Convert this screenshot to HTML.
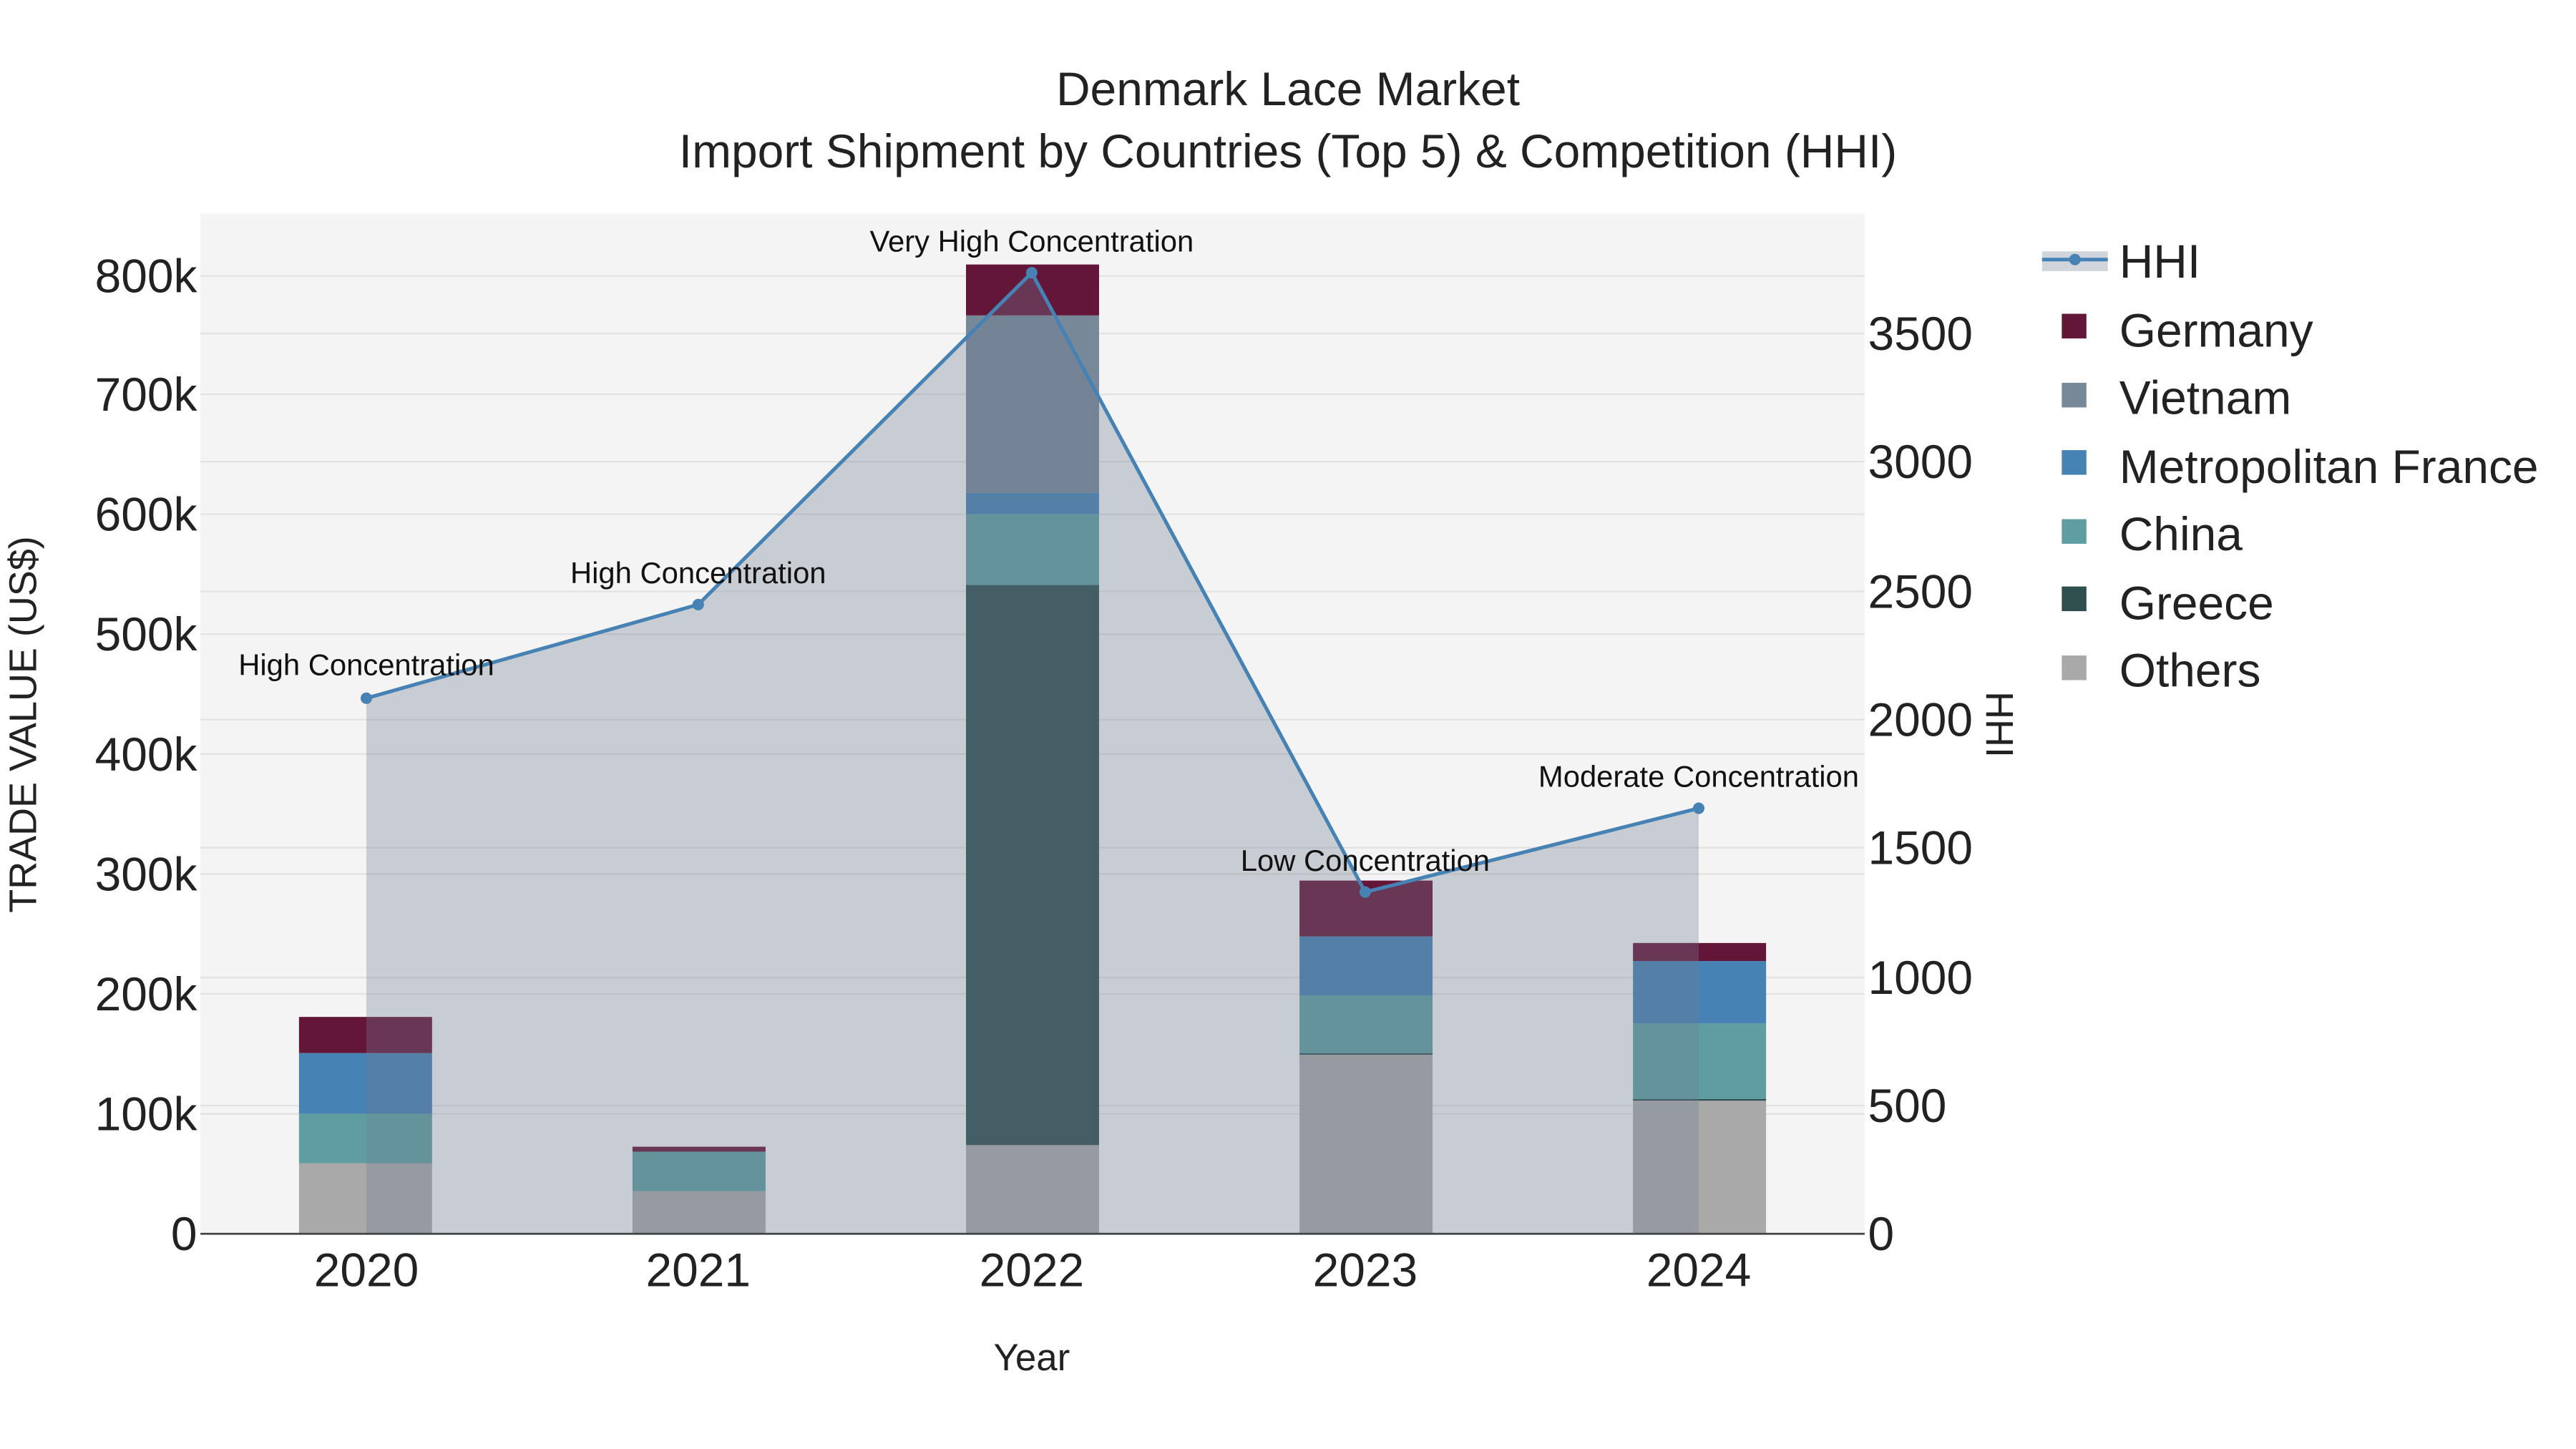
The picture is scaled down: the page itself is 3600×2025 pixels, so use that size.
<!DOCTYPE html>
<html><head><meta charset="utf-8"><style>html,body{margin:0;padding:0;background:#fff;}svg{display:block}</style></head>
<body>
<svg width="3600" height="2025" viewBox="0 0 1568 882" xmlns="http://www.w3.org/2000/svg" font-family="Liberation Sans, sans-serif">
<rect width="1568" height="882" fill="#fff"/>
<rect x="122" y="130" width="1013" height="621" fill="#f4f4f4"/>
<g stroke="#e2e2e2" stroke-width="1">
<line x1="122" x2="1135" y1="678" y2="678"/><line x1="122" x2="1135" y1="605" y2="605"/><line x1="122" x2="1135" y1="532" y2="532"/><line x1="122" x2="1135" y1="459" y2="459"/><line x1="122" x2="1135" y1="386" y2="386"/><line x1="122" x2="1135" y1="313" y2="313"/><line x1="122" x2="1135" y1="240" y2="240"/><line x1="122" x2="1135" y1="168" y2="168"/>
<line x1="122" x2="1135" y1="673" y2="673"/><line x1="122" x2="1135" y1="595" y2="595"/><line x1="122" x2="1135" y1="516" y2="516"/><line x1="122" x2="1135" y1="438" y2="438"/><line x1="122" x2="1135" y1="360" y2="360"/><line x1="122" x2="1135" y1="281" y2="281"/><line x1="122" x2="1135" y1="203" y2="203"/>
</g>
<rect x="182" y="708" width="81" height="43" fill="#a9a9a9"/>
<rect x="182" y="678" width="81" height="30" fill="#5f9ea0"/>
<rect x="182" y="641" width="81" height="37" fill="#4682b4"/>
<rect x="182" y="619" width="81" height="22" fill="#641638"/>
<rect x="385" y="725" width="81" height="26" fill="#a9a9a9"/>
<rect x="385" y="701" width="81" height="24" fill="#5f9ea0"/>
<rect x="385" y="698" width="81" height="3" fill="#641638"/>
<rect x="588" y="697" width="81" height="54" fill="#a9a9a9"/>
<rect x="588" y="356" width="81" height="341" fill="#2f4f4f"/>
<rect x="588" y="313" width="81" height="43" fill="#5f9ea0"/>
<rect x="588" y="300" width="81" height="13" fill="#4682b4"/>
<rect x="588" y="192" width="81" height="108" fill="#778899"/>
<rect x="588" y="161" width="81" height="31" fill="#641638"/>
<rect x="791" y="642" width="81" height="109" fill="#a9a9a9"/>
<rect x="791" y="641" width="81" height="1" fill="#2f4f4f"/>
<rect x="791" y="606" width="81" height="35" fill="#5f9ea0"/>
<rect x="791" y="570" width="81" height="36" fill="#4682b4"/>
<rect x="791" y="536" width="81" height="34" fill="#641638"/>
<rect x="994" y="670" width="81" height="81" fill="#a9a9a9"/>
<rect x="994" y="669" width="81" height="1" fill="#2f4f4f"/>
<rect x="994" y="623" width="81" height="46" fill="#5f9ea0"/>
<rect x="994" y="585" width="81" height="38" fill="#4682b4"/>
<rect x="994" y="574" width="81" height="11" fill="#641638"/>
<path d="M223,751 L223,425 L425,368 L628,166 L831,543 L1034,492 L1034,751 Z" fill="rgb(113,125,146)" fill-opacity="0.33"/>
<polyline points="223,425 425,368 628,166 831,543 1034,492" fill="none" stroke="#4682b4" stroke-width="2.2"/>
<g fill="#4682b4"><circle cx="223" cy="425" r="3.5"/><circle cx="425" cy="368" r="3.5"/><circle cx="628" cy="166" r="3.5"/><circle cx="831" cy="543" r="3.5"/><circle cx="1034" cy="492" r="3.5"/></g>
<line x1="122" x2="1135" y1="751" y2="751" stroke="#444" stroke-width="1.2"/>
<g font-size="18.2" fill="#111" text-anchor="middle">
<text x="223" y="411">High Concentration</text>
<text x="425" y="355">High Concentration</text>
<text x="628" y="153">Very High Concentration</text>
<text x="831" y="530">Low Concentration</text>
<text x="1034" y="479">Moderate Concentration</text>
</g>
<g font-size="28.7" fill="#222" text-anchor="end">
<text x="120" y="761">0</text><text x="120" y="688">100k</text><text x="120" y="615">200k</text><text x="120" y="542">300k</text><text x="120" y="469">400k</text><text x="120" y="396">500k</text><text x="120" y="323">600k</text><text x="120" y="250">700k</text><text x="120" y="178">800k</text>
</g>
<g font-size="28.7" fill="#222" text-anchor="start">
<text x="1137" y="761">0</text><text x="1137" y="683">500</text><text x="1137" y="605">1000</text><text x="1137" y="526">1500</text><text x="1137" y="448">2000</text><text x="1137" y="370">2500</text><text x="1137" y="291">3000</text><text x="1137" y="213">3500</text>
</g>
<g font-size="28.7" fill="#222" text-anchor="middle">
<text x="223" y="783">2020</text><text x="425" y="783">2021</text><text x="628" y="783">2022</text><text x="831" y="783">2023</text><text x="1034" y="783">2024</text>
</g>
<text x="628" y="834" font-size="23" fill="#222" text-anchor="middle">Year</text>
<text transform="translate(22,441) rotate(-90)" font-size="23.5" fill="#222" text-anchor="middle">TRADE VALUE (US$)</text>
<text transform="translate(1209,441) rotate(90)" font-size="23.5" fill="#222" text-anchor="middle">HHI</text>
<text x="784" y="64" font-size="28.7" fill="#222" text-anchor="middle">Denmark Lace Market</text>
<text x="784" y="102" font-size="28.7" fill="#222" text-anchor="middle">Import Shipment by Countries (Top 5) &amp; Competition (HHI)</text>
<rect x="1243" y="153" width="40" height="12" fill="rgb(113,125,146)" fill-opacity="0.33"/>
<line x1="1243" x2="1283" y1="158" y2="158" stroke="#4682b4" stroke-width="2.2"/>
<circle cx="1263" cy="158" r="3.5" fill="#4682b4"/>
<rect x="1255" y="191" width="15" height="15" fill="#641638"/>
<rect x="1255" y="233" width="15" height="15" fill="#778899"/>
<rect x="1255" y="274" width="15" height="15" fill="#4682b4"/>
<rect x="1255" y="316" width="15" height="15" fill="#5f9ea0"/>
<rect x="1255" y="357" width="15" height="15" fill="#2f4f4f"/>
<rect x="1255" y="399" width="15" height="15" fill="#a9a9a9"/>
<g font-size="28.7" fill="#222">
<text x="1290" y="169">HHI</text><text x="1290" y="211">Germany</text><text x="1290" y="252">Vietnam</text><text x="1290" y="294">Metropolitan France</text><text x="1290" y="335">China</text><text x="1290" y="377">Greece</text><text x="1290" y="418">Others</text>
</g>
</svg>
</body></html>
